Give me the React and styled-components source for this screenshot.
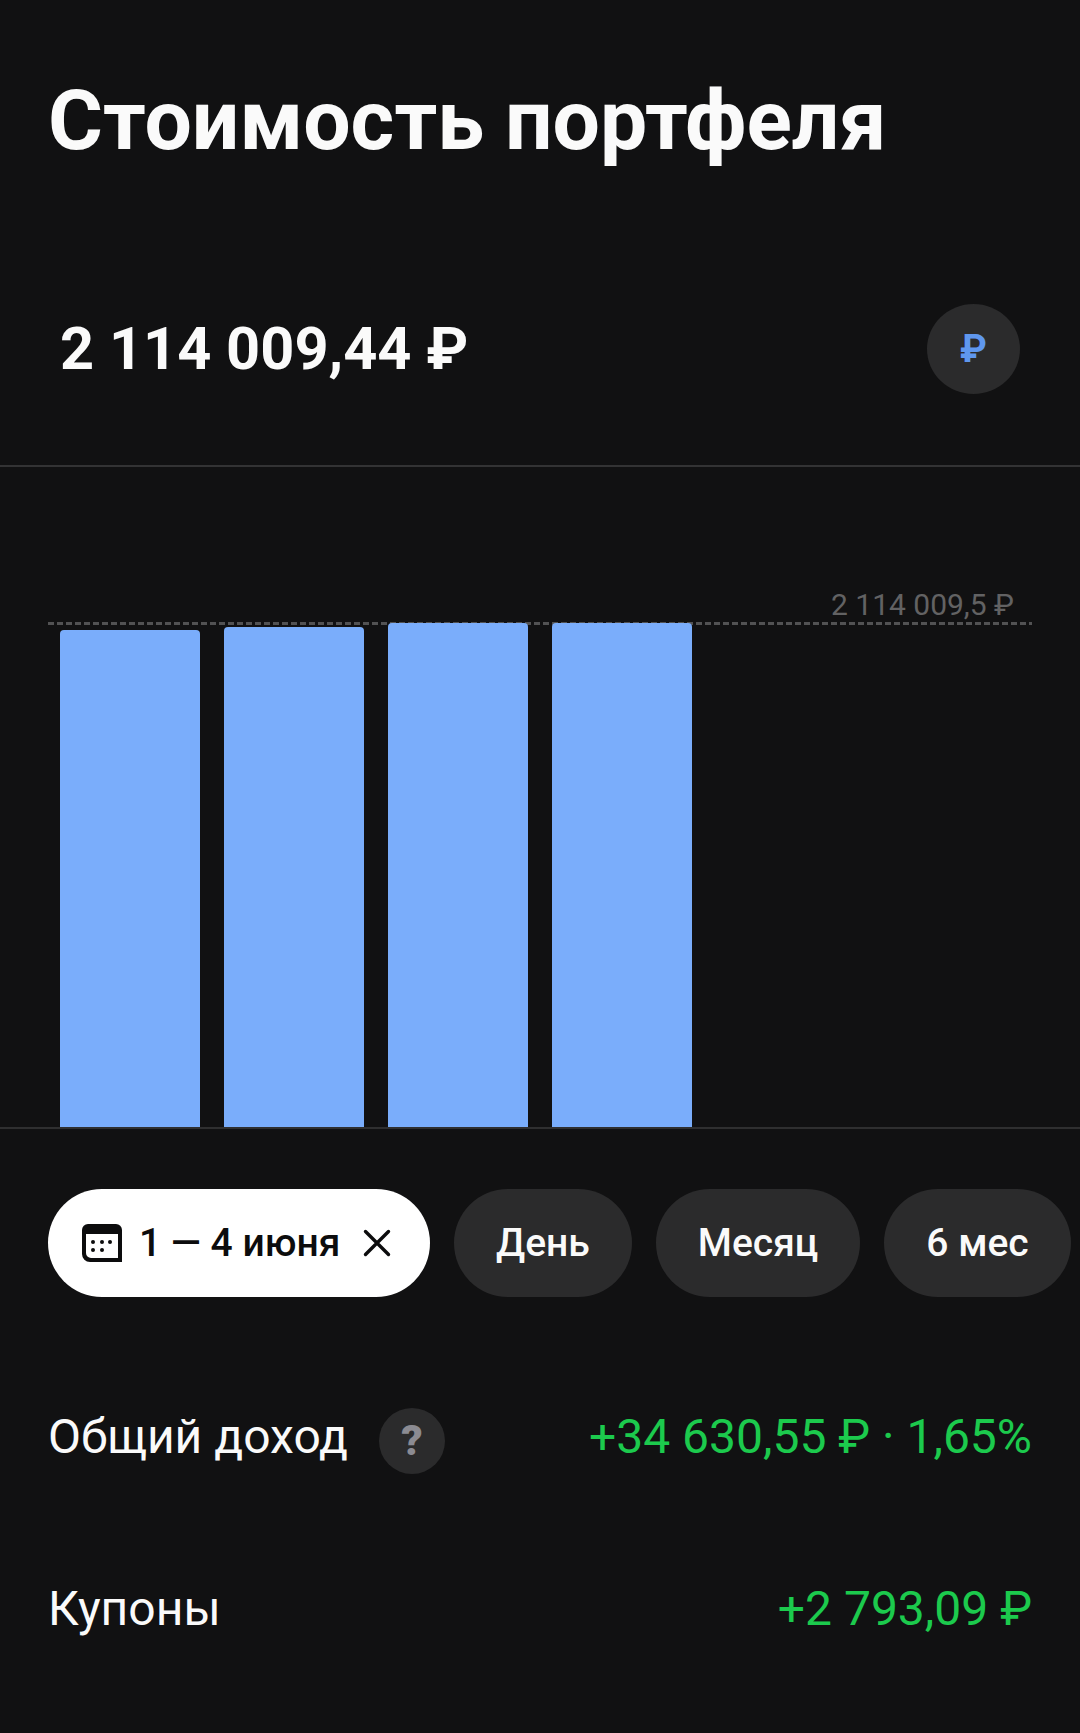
import styled, { createGlobalStyle } from "styled-components";

const GlobalStyle = createGlobalStyle`
  html, body {
    margin: 0;
    padding: 0;
    background: #111112;
  }
`;

const bars = [
  { id: 1, height: 497 },
  { id: 2, height: 500 },
  { id: 3, height: 504 },
  { id: 4, height: 504 },
];

const periods = ["День", "Месяц", "6 мес"];

const CalendarIcon = () => (
  <svg width="40" height="38" viewBox="0 0 40 38">
    <path
      fillRule="evenodd"
      d="M6 0H34a6 6 0 0 1 6 6V38H8a8 8 0 0 1-8-8V6a6 6 0 0 1 6-6ZM4 10V29a5 5 0 0 0 5 5H36V10Z"
      fill="#0c0c0d"
    />
    <circle cx="11" cy="18" r="2" fill="#0c0c0d" />
    <circle cx="20" cy="18" r="2" fill="#0c0c0d" />
    <circle cx="28" cy="18" r="2" fill="#0c0c0d" />
    <circle cx="11" cy="26" r="2" fill="#0c0c0d" />
    <circle cx="20" cy="26" r="2" fill="#0c0c0d" />
  </svg>
);

const CloseIcon = () => (
  <svg width="28" height="28" viewBox="0 0 28 28">
    <path d="M2.5 2.5L25.5 25.5M25.5 2.5L2.5 25.5" stroke="#0c0c0d" strokeWidth="3.4" strokeLinecap="round" />
  </svg>
);

const App = () => {
  return (
    <Page>
      <GlobalStyle />
      <Title>Стоимость портфеля</Title>

      <Summary>
        <Amount>2 114 009,44 ₽</Amount>
        <CurrencyButton>₽</CurrencyButton>
      </Summary>

      <Chart>
        <MaxLabel>2 114 009,5 ₽</MaxLabel>
        <MaxLine />
        <Bars>
          {bars.map((bar) => (
            <Bar key={bar.id} $height={bar.height} />
          ))}
        </Bars>
      </Chart>

      <Periods>
        <DateChip>
          <CalendarIcon />
          <DateText>1 — 4 июня</DateText>
          <CloseIcon />
        </DateChip>
        {periods.map((period) => (
          <Period key={period}>{period}</Period>
        ))}
      </Periods>

      <Rows>
        <Row>
          <RowLabel>
            Общий доход
            <Hint>?</Hint>
          </RowLabel>
          <RowValue>+34 630,55 ₽ · 1,65%</RowValue>
        </Row>
        <Row>
          <RowLabel>Купоны</RowLabel>
          <RowValue>+2 793,09 ₽</RowValue>
        </Row>
      </Rows>
    </Page>
  );
};

// Styled Components

const Page = styled.div`
  width: 1080px;
  height: 1733px;
  overflow: hidden;
  background: #111112;
  color: #fafafa;
  font-family: Roboto, "Liberation Sans", sans-serif;
`;

const Title = styled.h1`
  margin: 0;
  padding: 73px 0 0 48px;
  height: 85px;
  font-size: 84px;
  line-height: 96px;
  font-weight: 700;
  white-space: nowrap;
`;

const Summary = styled.div`
  display: flex;
  align-items: center;
  justify-content: space-between;
  margin-top: 146px;
  padding: 0 60px 71px 60px;
  border-bottom: 2px solid #333334;
`;

const Amount = styled.div`
  font-size: 59.5px;
  line-height: 68px;
  font-weight: 700;
`;

const CurrencyButton = styled.div`
  display: flex;
  align-items: center;
  justify-content: center;
  width: 93px;
  height: 90px;
  border-radius: 50%;
  background: #2b2b2c;
  color: #5f97ee;
  font-size: 38px;
  font-weight: 700;
`;

const Chart = styled.div`
  padding-top: 121px;
  border-bottom: 2px solid #2f2f30;
`;

const MaxLabel = styled.div`
  padding-right: 66px;
  text-align: right;
  font-size: 30px;
  line-height: 34px;
  color: #626263;
`;

const MaxLine = styled.div`
  height: 3px;
  margin: 0 48px -2px;
  background: repeating-linear-gradient(90deg, #525253 0 6px, transparent 6px 9px);
`;

const Bars = styled.div`
  display: flex;
  align-items: flex-end;
  gap: 24px;
  height: 504px;
  padding-left: 60px;
`;

const Bar = styled.div`
  width: 140px;
  height: ${(p) => p.$height}px;
  border-radius: 4px 4px 0 0;
  background: #7aadfb;
`;

const Periods = styled.div`
  display: flex;
  gap: 24px;
  margin-top: 60px;
  padding-left: 48px;
`;

const Pill = styled.div`
  display: flex;
  align-items: center;
  height: 108px;
  box-sizing: border-box;
  border-radius: 54px;
  font-size: 39px;
  font-weight: 500;
  white-space: nowrap;
`;

const DateChip = styled(Pill)`
  width: 382px;
  padding-left: 34px;
  background: #ffffff;
  color: #0c0c0d;
`;

const DateText = styled.span`
  margin: 0 23px 0 17px;
`;

const Period = styled(Pill)`
  padding: 0 42px;
  background: #2b2b2c;
`;

const Rows = styled.div`
  display: flex;
  flex-direction: column;
  gap: 106px;
  margin-top: 111px;
  padding: 0 48px;
`;

const Row = styled.div`
  display: flex;
  align-items: flex-start;
  justify-content: space-between;
  height: 66px;
  font-size: 48px;
  line-height: 58px;
  white-space: nowrap;
`;

const RowLabel = styled.div`
  display: flex;
  align-items: flex-start;
`;

const Hint = styled.span`
  display: flex;
  align-items: center;
  justify-content: center;
  width: 66px;
  height: 66px;
  margin-left: 31px;
  border-radius: 50%;
  background: #2b2b2c;
  color: #8b8b92;
  font-size: 42px;
  font-weight: 900;
`;

const RowValue = styled.div`
  color: #1cca4d;
`;

export default App;
